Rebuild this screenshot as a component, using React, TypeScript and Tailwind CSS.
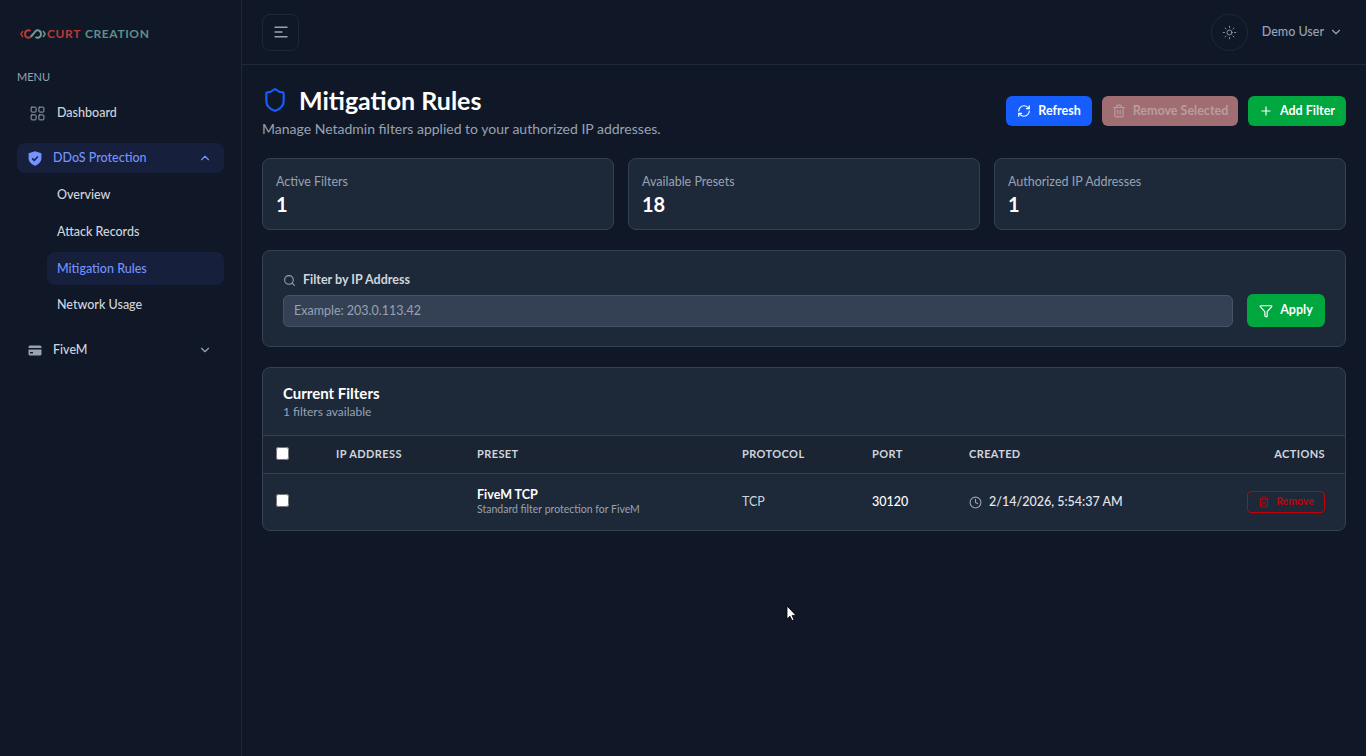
import React from "react";
import { ChevronDown, ChevronUp, Clock, Funnel, LayoutGrid, Plus, RefreshCw, Search, Shield, Sun, Trash2 } from "lucide-react";

function Logo() {
  return (
    <div className="flex items-center h-[20px]">
      <svg width="26" height="14" viewBox="0 0 26 14" fill="none" className="mr-[1px]">
        <path d="M3 4 L0.8 7 L3 10" stroke="#b93b36" strokeWidth="1.4" />
        <path d="M10.5 4.2 C9 2.6 5 3 5 7 C5 11 9 11.4 10.5 9.8 L13 7" stroke="#b93b36" strokeWidth="1.9" />
        <path d="M11 9.8 L15.5 4.2 C17 2.6 21 3 21 7 C21 11 17 11.4 15.5 9.8" stroke="#6f9a94" strokeWidth="1.9" />
        <path d="M23 4 L25.2 7 L23 10" stroke="#6f9a94" strokeWidth="1.4" />
      </svg>
      <span className="text-[12px] font-bold tracking-[0.6px] leading-none text-[#b93b36]">CURT</span>
      <span className="text-[12px] font-bold tracking-[0.6px] leading-none text-[#5f8f8a] ml-[4px]">CREATION</span>
    </div>
  );
}

function Hamburger() {
  return (
    <svg width="14" height="12" viewBox="0 0 14 12" fill="none" stroke="#98a2b3" strokeWidth="1.4" strokeLinecap="round">
      <path d="M1 1.2H13" />
      <path d="M1 6H8" />
      <path d="M1 10.8H13" />
    </svg>
  );
}

function ShieldCheckFilled() {
  return (
    <svg width="14" height="15" viewBox="0 0 14 15">
      <path d="M7 0.3 L13.4 2.3 V7.2 C13.4 10.8 10.6 13.4 7 14.7 C3.4 13.4 0.6 10.8 0.6 7.2 V2.3 Z" fill="#7592ff" />
      <path d="M4.2 7.4 L6.2 9.4 L9.9 5.4" stroke="#161f3b" strokeWidth="1.5" fill="none" />
    </svg>
  );
}

function CardFilled() {
  return (
    <svg width="14" height="11" viewBox="0 0 14 11">
      <path d="M2 0.5 H12 A1.5 1.5 0 0 1 13.5 2 V3 H0.5 V2 A1.5 1.5 0 0 1 2 0.5 Z" fill="#98a2b3" />
      <path d="M0.5 4.6 H13.5 V9 A1.5 1.5 0 0 1 12 10.5 H2 A1.5 1.5 0 0 1 0.5 9 Z" fill="#98a2b3" />
      <rect x="2" y="7" width="3" height="1.4" fill="#101828" />
    </svg>
  );
}

function Cursor() {
  return (
    <svg width="12" height="17" viewBox="0 0 12 17" className="absolute left-[786px] top-[605px]">
      <path d="M1 1 V14 L4 11.2 L6 15.6 L8 14.7 L6 10.4 H10 Z" fill="#fff" stroke="#000" strokeWidth="0.8" />
    </svg>
  );
}

function SubItem({ label, active }: { label: string; active?: boolean }) {
  return (
    <div className={active ? "h-[33px] rounded-lg bg-[#161f3b] pl-[10px] flex items-center text-[#7592ff] text-[12.5px] font-medium" : "h-[33px] rounded-lg pl-[10px] flex items-center text-[#d0d5dd] text-[12.5px] font-medium"}>
      {label}
    </div>
  );
}

function Stat({ label, value }: { label: string; value: string }) {
  return (
    <div className="h-[72px] rounded-lg border border-[#344054] bg-[#1d2939] pl-[13px] pt-[15px]">
      <div className="text-[12.5px] leading-[16px] text-[#98a2b3]">{label}</div>
      <div className="text-[20px] leading-[28px] font-bold text-white">{value}</div>
    </div>
  );
}

function Th({ children, className }: { children: React.ReactNode; className?: string }) {
  return <th className={"p-0 text-left text-[11px] font-bold tracking-[0.4px] text-[#d0d5dd] " + (className ?? "")}>{children}</th>;
}

export default function App() {
  return (
    <div className="relative flex h-[756px] w-[1366px] overflow-hidden bg-[#101828] font-['Lato',sans-serif]">
      <aside className="w-[242px] shrink-0 border-r border-[#1d2939] pl-[17px] pr-[17px]">
        <div className="pl-[3px] pt-[24px]"><Logo /></div>
        <div className="mt-[26px] text-[11px] leading-[14px] text-[#98a2b3]">MENU</div>
        <nav className="mt-[14px]">
          <div className="h-[30px] flex items-center pl-[12px]">
            <LayoutGrid size={17} strokeWidth={1.4} className="text-[#98a2b3]" />
            <span className="ml-[11px] text-[12.5px] font-medium text-[#d0d5dd]">Dashboard</span>
          </div>
          <div className="mt-[15px] h-[30px] rounded-lg bg-[#161f3b] flex items-center pl-[11px] pr-[12px]">
            <ShieldCheckFilled />
            <span className="ml-[11px] flex-1 text-[12.5px] font-medium text-[#7592ff]">DDoS Protection</span>
            <ChevronUp size={14} className="text-[#7592ff]" />
          </div>
          <div className="mt-[6px] ml-[30px] flex flex-col gap-[3.7px]">
            <SubItem label="Overview" />
            <SubItem label="Attack Records" />
            <SubItem label="Mitigation Rules" active />
            <SubItem label="Network Usage" />
          </div>
          <div className="mt-[13px] h-[30px] flex items-center pl-[11px] pr-[12px]">
            <CardFilled />
            <span className="ml-[11px] flex-1 text-[12.5px] font-medium text-[#d0d5dd]">FiveM</span>
            <ChevronDown size={14} className="text-[#98a2b3]" />
          </div>
        </nav>
      </aside>

      <div className="flex-1 min-w-0">
        <header className="h-[65px] border-b border-[#1d2939] flex items-center pl-[20px] pr-[23px]">
          <div className="w-[37px] h-[37px] rounded-lg border border-[#1d2939] flex items-center justify-center"><Hamburger /></div>
          <div className="flex-1" />
          <div className="w-[37px] h-[37px] rounded-full border border-[#1d2939] flex items-center justify-center">
            <Sun size={15} strokeWidth={1.4} className="text-[#98a2b3]" />
          </div>
          <span className="ml-[14px] text-[12.5px] font-medium text-[#98a2b3]">Demo User</span>
          <ChevronDown size={14} className="ml-[5px] text-[#98a2b3]" />
        </header>

        <main className="px-[20px] pt-[20px]">
          <div className="flex items-start justify-between h-[72px]">
            <div>
              <div className="flex items-center h-[30px]">
                <Shield size={26} strokeWidth={2} className="text-[#155dfc]" />
                <h1 className="ml-[11px] text-[25px] leading-[30px] font-bold text-white">Mitigation Rules</h1>
              </div>
              <p className="mt-[4px] text-[14px] leading-[20px] text-[#98a2b3]">Manage Netadmin filters applied to your authorized IP addresses.</p>
            </div>
            <div className="flex items-center gap-[10px] pt-[11px]">
              <button className="h-[30px] w-[86px] rounded-md bg-[#155dfc] flex items-center justify-center text-white text-[12.5px] font-bold">
                <RefreshCw size={14} className="mr-[7px]" />Refresh
              </button>
              <button className="h-[30px] w-[136px] rounded-md bg-[#a06d72] flex items-center justify-center text-[#bb9ca0] text-[12.5px] font-bold">
                <Trash2 size={14} className="mr-[7px]" />Remove Selected
              </button>
              <button className="h-[30px] w-[98px] rounded-md bg-[#00a63e] flex items-center justify-center text-white text-[12.5px] font-bold">
                <Plus size={14} className="mr-[7px]" />Add Filter
              </button>
            </div>
          </div>

          <div className="grid grid-cols-3 gap-[14px] mt-[1px]">
            <Stat label="Active Filters" value="1" />
            <Stat label="Available Presets" value="18" />
            <Stat label="Authorized IP Addresses" value="1" />
          </div>

          <div className="mt-[20px] h-[97px] rounded-lg border border-[#344054] bg-[#1d2939] px-[20px] pt-[21px]">
            <div className="flex items-center h-[16px] text-[12.5px] font-bold text-[#d0d5dd]">
              <Search size={13} className="text-[#98a2b3] mr-[7px]" />Filter by IP Address
            </div>
            <div className="flex items-center gap-[14px] mt-[6px]">
              <input
                readOnly
                placeholder="Example: 203.0.113.42"
                className="flex-1 h-[32px] rounded-md border border-[#475467] bg-[#344054] px-[10px] text-[12.5px] placeholder:text-[#98a2b3] outline-none"
              />
              <button className="h-[33px] w-[78px] rounded-md bg-[#00a63e] flex items-center justify-center text-white text-[12.5px] font-bold">
                <Funnel size={14} className="mr-[7px]" />Apply
              </button>
            </div>
          </div>

          <div className="mt-[20px] h-[164px] rounded-lg border border-[#344054] bg-[#1d2939] overflow-hidden">
            <div className="h-[67px] pl-[20px] pt-[15px]">
              <h2 className="text-[15px] leading-[20px] font-bold text-white">Current Filters</h2>
              <p className="mt-[1px] text-[12px] leading-[16px] text-[#98a2b3]">1 filters available</p>
            </div>
            <table className="w-full table-fixed border-collapse">
              <colgroup>
                <col className="w-[73px]" />
                <col className="w-[141px]" />
                <col className="w-[265px]" />
                <col className="w-[130px]" />
                <col className="w-[97px]" />
                <col />
                <col className="w-[120px]" />
              </colgroup>
              <thead>
                <tr className="h-[38px] border-y border-[#344054] bg-[#1a2433]">
                  <Th className="pl-[13px]"><input type="checkbox" className="block w-[13px] h-[13px] m-0 -mt-[2px]" /></Th>
                  <Th>IP ADDRESS</Th>
                  <Th>PRESET</Th>
                  <Th>PROTOCOL</Th>
                  <Th>PORT</Th>
                  <Th>CREATED</Th>
                  <Th className="text-right pr-[20px]">ACTIONS</Th>
                </tr>
              </thead>
              <tbody>
                <tr className="h-[57px]">
                  <td className="pl-[13px]"><input type="checkbox" className="block w-[13px] h-[13px] m-0 -mt-[4px]" /></td>
                  <td />
                  <td>
                    <div className="text-[12.5px] leading-[14px] font-bold text-white">FiveM TCP</div>
                    <div className="mt-[1px] text-[10.5px] leading-[13px] text-[#98a2b3]">Standard filter protection for FiveM</div>
                  </td>
                  <td className="text-[12.5px] text-[#d0d5dd]">TCP</td>
                  <td className="text-[12.5px] font-medium text-white">30120</td>
                  <td>
                    <div className="flex items-center text-[12.5px] font-medium text-[#e4e7ec]">
                      <Clock size={13} className="mr-[7px] text-[#98a2b3]" />2/14/2026, 5:54:37 AM
                    </div>
                  </td>
                  <td className="pr-[20px]">
                    <button className="ml-auto h-[22px] w-[78px] rounded-[4px] border border-[#c4000a] flex items-center justify-center text-[#c4000a] text-[10.5px] font-bold">
                      <Trash2 size={12} className="mr-[6px]" />Remove
                    </button>
                  </td>
                </tr>
              </tbody>
            </table>
          </div>
        </main>
      </div>
      <Cursor />
    </div>
  );
}
